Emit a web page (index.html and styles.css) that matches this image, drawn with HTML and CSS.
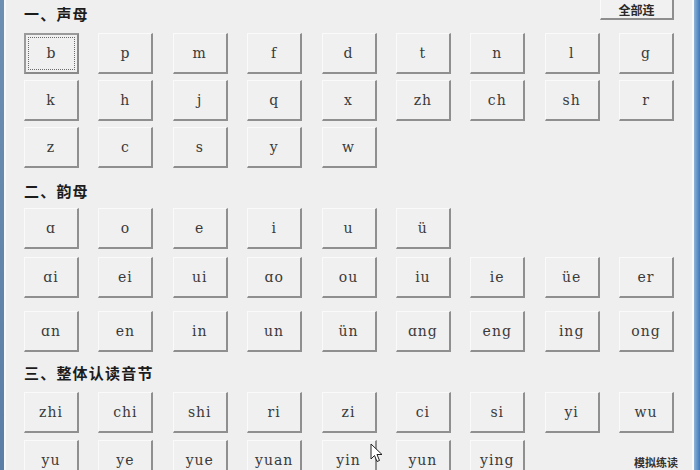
FILE: index.html
```html
<!DOCTYPE html>
<html lang="zh-CN">
<head>
<meta charset="utf-8">
<title>拼音</title>
<link rel="stylesheet" href="styles.css">
</head>
<body>
<div class="window">
  <div class="edge-left"></div>
  <main class="form">
    <div class="header">
      <h2 class="title">一、声母</h2>
      <button class="top-btn">全部连</button>
    </div>
    <div class="grid s1">
      <div class="row"><span class="key focus">b</span><span class="key">p</span><span class="key">m</span><span class="key">f</span><span class="key">d</span><span class="key">t</span><span class="key">n</span><span class="key">l</span><span class="key">g</span></div>
      <div class="row"><span class="key">k</span><span class="key">h</span><span class="key">j</span><span class="key">q</span><span class="key">x</span><span class="key">zh</span><span class="key">ch</span><span class="key">sh</span><span class="key">r</span></div>
      <div class="row"><span class="key">z</span><span class="key">c</span><span class="key">s</span><span class="key">y</span><span class="key">w</span></div>
    </div>
    <h2 class="title t2">二、韵母</h2>
    <div class="grid s2">
      <div class="row"><span class="key">ɑ</span><span class="key">o</span><span class="key">e</span><span class="key">i</span><span class="key">u</span><span class="key">ü</span></div>
      <div class="row r2"><span class="key">ɑi</span><span class="key">ei</span><span class="key">ui</span><span class="key">ɑo</span><span class="key">ou</span><span class="key">iu</span><span class="key">ie</span><span class="key">üe</span><span class="key">er</span></div>
      <div class="row r3"><span class="key">ɑn</span><span class="key">en</span><span class="key">in</span><span class="key">un</span><span class="key">ün</span><span class="key">ɑng</span><span class="key">eng</span><span class="key">ing</span><span class="key">ong</span></div>
    </div>
    <h2 class="title t3">三、整体认读音节</h2>
    <div class="grid s3">
      <div class="row"><span class="key">zhi</span><span class="key">chi</span><span class="key">shi</span><span class="key">ri</span><span class="key">zi</span><span class="key">ci</span><span class="key">si</span><span class="key">yi</span><span class="key">wu</span></div>
      <div class="row r2"><span class="key">yu</span><span class="key">ye</span><span class="key">yue</span><span class="key">yuan</span><span class="key">yin</span><span class="key">yun</span><span class="key">ying</span><span class="blank"></span><span class="note">模拟练读</span></div>
    </div>
  </main>
  <div class="edge-right"></div>
</div>
<svg class="cursor" width="13" height="20" viewBox="0 0 13 20">
  <path d="M1 1 L1 16 L4.5 12.5 L7 18.5 L9.5 17.5 L7 11.5 L12 11.5 Z" fill="#fff" stroke="#222" stroke-width="1" stroke-linejoin="round"/>
</svg>
</body>
</html>
```
FILE: styles.css
```css
html, body {
  margin: 0;
  padding: 0;
  width: 700px;
  height: 470px;
  overflow: hidden;
  background: #efefef;
}
body { position: relative; }
.window {
  display: flex;
  width: 700px;
  height: 470px;
}
.edge-left {
  width: 4px;
  background: linear-gradient(#6d8fb2, #5a7ea6);
  border-right: 2px solid #f7f8fa;
}
.edge-right {
  width: 6px;
  border-left: 2px solid #fafafa;
  background: linear-gradient(90deg, #8eb3d8, #3f78b8);
}
.form {
  flex: 1;
  padding-left: 18px;
  box-sizing: border-box;
  background: #efefef;
}
.header {
  display: flex;
  justify-content: space-between;
  align-items: flex-start;
  width: 650px;
  height: 26px;
}
.title {
  margin: 0;
  font-family: "Noto Sans CJK SC", "Noto Sans", sans-serif;
  font-weight: 700;
  font-size: 15px;
  letter-spacing: 1.2px;
  line-height: 20px;
  color: #1c1c1c;
}
.header .title { padding-top: 4px; }
.top-btn {
  width: 74px;
  height: 20px;
  margin: 0;
  padding: 0;
  background: #f1f1f1;
  border: 0;
  border-left: 1px solid #fbfbfb;
  border-right: 2px solid #8e8e8e;
  border-bottom: 2px solid #8e8e8e;
  font-family: "Noto Sans CJK SC", sans-serif;
  font-size: 12px;
  font-weight: 700;
  color: #2a2a2a;
  line-height: 17px;
}
.grid {
  display: flex;
  flex-direction: column;
  width: 650px;
}
.row {
  display: grid;
  grid-template-columns: repeat(9, 55px);
  column-gap: 19.375px;
}
.s1 { margin-top: 7px; gap: 6px; }
.t2 { margin-top: 13px; }
.s2 { margin-top: 7px; }
.s2 .r2 { margin-top: 8px; }
.s2 .r3 { margin-top: 13px; }
.t3 { margin-top: 11px; }
.s3 { margin-top: 9px; }
.s3 .r2 { margin-top: 7px; }
.key {
  position: relative;
  box-sizing: border-box;
  height: 41px;
  display: flex;
  align-items: center;
  justify-content: center;
  background: #f0f0f0;
  border-top: 1px solid #fafafa;
  border-left: 1px solid #fafafa;
  border-right: 2px solid #8f8f8f;
  border-bottom: 2px solid #8f8f8f;
  font-family: "DejaVu Serif", "Liberation Serif", serif;
  font-size: 14px;
  letter-spacing: 1px;
  color: #3a3a3a;
  padding-bottom: 1px;
}
.key.focus {
  border: 2px solid #8a8a8a;
  border-top-color: #9a9a9a;
  border-left-color: #9a9a9a;
}
.key.focus::after {
  content: "";
  position: absolute;
  inset: 2px;
  border: 1px dotted #6a6a6a;
}
.note {
  padding-top: 16px;
  padding-left: 15px;
  font-family: "Noto Sans CJK SC", sans-serif;
  font-size: 11px;
  font-weight: 700;
  color: #333;
  white-space: nowrap;
  line-height: 13px;
}
.cursor {
  position: absolute;
  left: 370px;
  top: 443px;
}
```
